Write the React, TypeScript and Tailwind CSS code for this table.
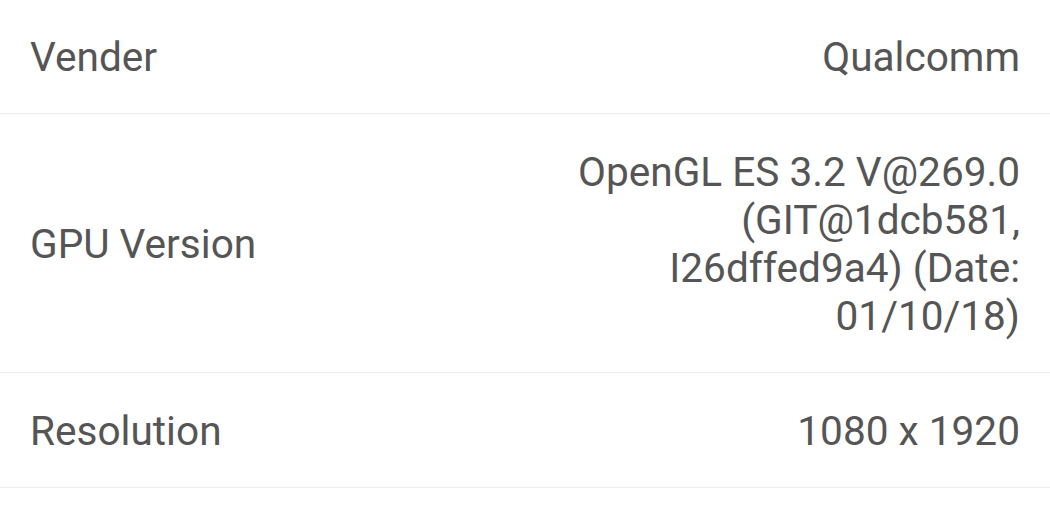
const rows = [
  { label: "Vender", value: "Qualcomm" },
  {
    label: "GPU Version",
    value: "OpenGL ES 3.2 V@269.0 (GIT@1dcb581, I26dffed9a4) (Date: 01/10/18)",
  },
  { label: "Resolution", value: "1080 x 1920" },
];

const App = () => {
  return (
    <div className="w-screen min-h-screen bg-white font-['Roboto',sans-serif] text-[40.6px] leading-[48px] text-[#555555]">
      {rows.map((row) => (
        <div
          key={row.label}
          className="flex items-center justify-between gap-6 px-[30px] pt-[34px] pb-[32px] first:pt-[33px] border-b border-[#ececec]"
        >
          <div className="whitespace-nowrap">{row.label}</div>
          <div className="max-w-[495px] text-right">{row.value}</div>
        </div>
      ))}
    </div>
  );
};

export default App;
